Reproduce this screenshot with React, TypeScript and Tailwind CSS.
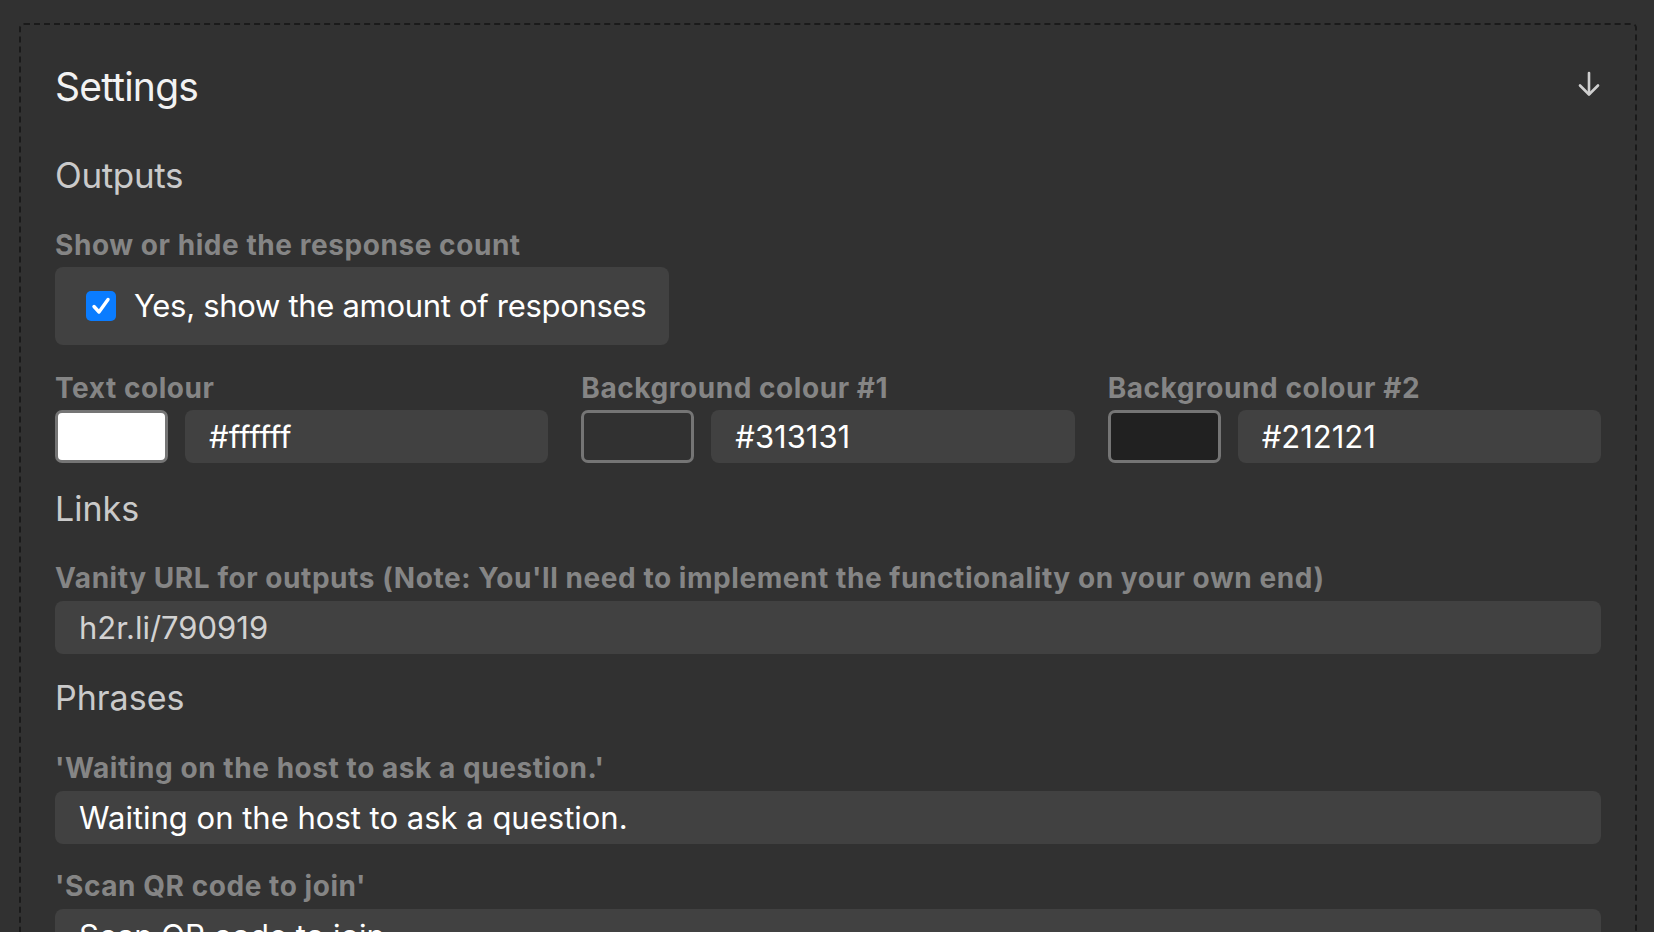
import React from "react";

const font = { fontFamily: "Inter, 'Noto Sans', sans-serif" };

function ArrowDownIcon() {
  return (
    <svg width="22" height="26" viewBox="0 0 22 26" fill="none" stroke="#cfcfcf" strokeWidth="2.6" strokeLinecap="round" strokeLinejoin="round">
      <path d="M11 2 V23" />
      <path d="M2 14.5 L11 23.5 L20 14.5" />
    </svg>
  );
}

function FieldLabel({ children, className = "" }: { children: React.ReactNode; className?: string }) {
  return (
    <div className={`text-[28px] leading-[32px] font-bold tracking-[0.02em] text-[#858585] ${className}`}>
      {children}
    </div>
  );
}

function TextField({ value, dim = false }: { value: string; dim?: boolean }) {
  return (
    <input
      readOnly
      defaultValue={value}
      className={`h-[53px] w-full rounded-[8px] bg-[#414141] px-[24px] text-[31px] outline-none ${
        dim ? "text-[#d2d2d2]" : "text-white"
      }`}
    />
  );
}

function ColourField({ label, value, swatch }: { label: string; value: string; swatch: string }) {
  return (
    <div className="flex flex-col">
      <FieldLabel>{label}</FieldLabel>
      <div className="mt-[6px] flex gap-[17px]">
        <div className={`h-[53px] w-[113px] shrink-0 rounded-[7px] border-[3px] border-[#757575] ${swatch}`} />
        <TextField value={value} />
      </div>
    </div>
  );
}

export default function App() {
  return (
    <div style={font} className="min-h-screen bg-[#313131] pl-[19px] pr-[17px] pt-[23px]">
      <div className="rounded-[5px] border-2 border-dashed border-[#1a1a1a] px-[34px] pt-[38px] pb-[60px]">
        {/* Header */}
        <div className="flex h-[48px] items-center justify-between">
          <h1 className="text-[39px] leading-[48px] tracking-[-0.02em] text-[#f2f2f2]">Settings</h1>
          <div className="mr-[1px] -mt-[6px]">
            <ArrowDownIcon />
          </div>
        </div>

        {/* Outputs */}
        <h2 className="mt-[44px] text-[35px] leading-[40px] tracking-[-0.01em] text-[#cacaca]">Outputs</h2>
        <FieldLabel className="mt-[34px]">Show or hide the response count</FieldLabel>
        <label className="mt-[6px] flex h-[78px] w-fit items-center gap-[18px] rounded-[8px] bg-[#414141] pl-[31px] pr-[23px]">
          <span className="flex h-[30px] w-[30px] items-center justify-center rounded-[5px] bg-[#0a7cff]">
            <svg width="22" height="22" viewBox="0 0 22 22" fill="none" stroke="white" strokeWidth="3.4" strokeLinecap="round" strokeLinejoin="round">
              <path d="M4 11.5 L9 17 L18 4.5" />
            </svg>
          </span>
          <span className="whitespace-nowrap text-[31px] tracking-[-0.01em] text-white">Yes, show the amount of responses</span>
        </label>

        <div className="mt-[27px] grid grid-cols-3 gap-[33px]">
          <ColourField label="Text colour" value="#ffffff" swatch="bg-white" />
          <ColourField label="Background colour #1" value="#313131" swatch="bg-[#313131]" />
          <ColourField label="Background colour #2" value="#212121" swatch="bg-[#212121]" />
        </div>

        {/* Links */}
        <h2 className="mt-[26px] text-[34px] leading-[40px] text-[#cacaca]">Links</h2>
        <FieldLabel className="mt-[33px]">
          Vanity URL for outputs (Note: You'll need to implement the functionality on your own end)
        </FieldLabel>
        <div className="mt-[7px]">
          <TextField value="h2r.li/790919" dim />
        </div>

        {/* Phrases */}
        <h2 className="mt-[24px] text-[34px] leading-[40px] text-[#cacaca]">Phrases</h2>
        <FieldLabel className="mt-[34px]">'Waiting on the host to ask a question.'</FieldLabel>
        <div className="mt-[7px]">
          <TextField value="Waiting on the host to ask a question." />
        </div>
        <FieldLabel className="mt-[26px]">'Scan QR code to join'</FieldLabel>
        <div className="mt-[7px]">
          <TextField value="Scan QR code to join" />
        </div>
      </div>
    </div>
  );
}
